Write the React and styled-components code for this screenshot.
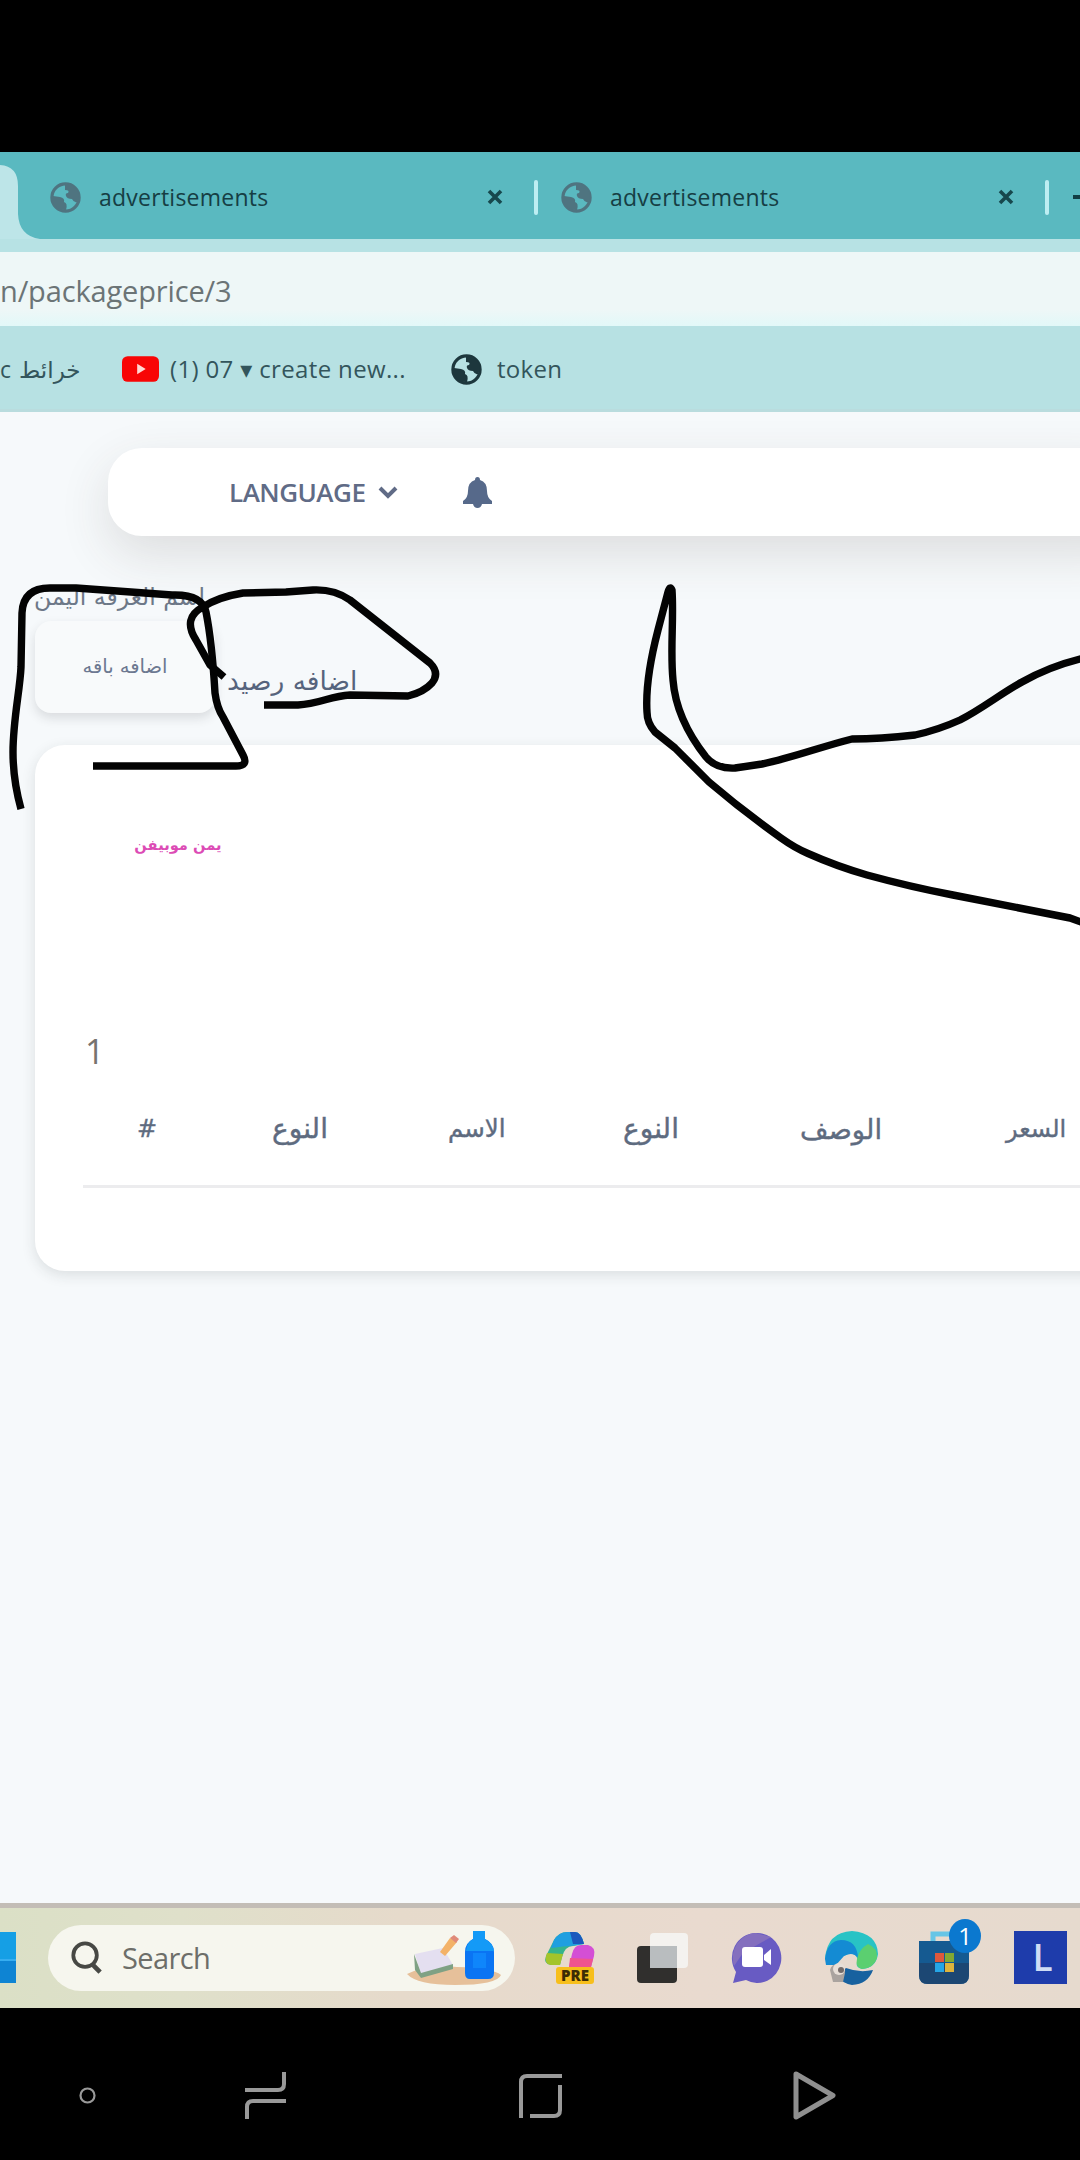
import React from "react";
import styled, { createGlobalStyle } from "styled-components";

const GlobalStyle = createGlobalStyle`
  * { box-sizing: border-box; }
  html, body { margin: 0; padding: 0; background: #000; }
  body { font-family: "Open Sans", "Noto Sans", "DejaVu Sans", sans-serif; }
`;

const Screen = styled.div`
  position: relative;
  width: 1080px;
  height: 2160px;
  padding-top: 152px;
  overflow: hidden;
  background: #000;
  display: flex;
  flex-direction: column;
`;

const TabStrip = styled.div`
  display: flex;
  flex: none;
  height: 87px;
  background: #5ab9c0;
  overflow: hidden;
`;

const ActiveTab = styled.svg`
  flex: none;
  width: 40px;
  height: 87px;
`;

const Tab = styled.div`
  display: flex;
  flex: none;
  align-items: center;
  width: 511px;
  height: 87px;
  padding-left: 10px;
  padding-top: 3px;
`;

const TabTitle = styled.span`
  flex: none;
  width: 380px;
  margin-left: 18px;
  font-size: 23px;
  line-height: 30px;
  letter-spacing: 0.25px;
  color: #163e44;
`;

const CloseMark = styled.svg`
  flex: none;
  width: 16px;
  height: 16px;
  margin-left: 8px;
`;

const TabDivider = styled.i`
  flex: none;
  width: 4px;
  height: 35px;
  margin-left: 31px;
  background: #bdeef2;
  border-radius: 2px;
`;

const NewTab = styled.svg`
  flex: none;
  width: 18px;
  height: 87px;
  margin-left: 11px;
`;

const AddressBar = styled.div`
  flex: none;
  height: 87px;
  padding: 13px 0 0;
  background: #b7e2e4;
`;

const AddressField = styled.div`
  height: 74px;
  padding: 19px 0 0 0;
  background: linear-gradient(#eef7f7 78%, #e2f8f8);
  font-size: 29px;
  line-height: 40px;
  letter-spacing: -0.15px;
  white-space: nowrap;
  color: #6b7476;
`;

const Bookmarks = styled.div`
  display: flex;
  flex: none;
  align-items: center;
  height: 86px;
  padding-top: 3px;
  background: #b7e1e3;
  border-bottom: 3px solid #b9dcde;
  white-space: nowrap;
`;

const Bookmark = styled.div`
  display: flex;
  flex: none;
  align-items: center;
  width: ${(p) => p.$width}px;
  gap: ${(p) => p.$gap || 0}px;
  font-size: ${(p) => p.$size || 24}px;
  line-height: 34px;
  letter-spacing: ${(p) => p.$spacing || 0}px;
  color: #33555c;
`;

const Page = styled.main`
  flex: none;
  height: 1491px;
  padding-top: 36px;
  background: #f6f9fb;
  overflow: hidden;
`;

const NavCard = styled.header`
  display: flex;
  align-items: center;
  height: 88px;
  margin-left: 108px;
  margin-right: -60px;
  padding-left: 121px;
  border-radius: 34px;
  background: #fff;
  box-shadow: 0 18px 50px rgba(70, 60, 50, 0.14);
`;

const Language = styled.button`
  display: flex;
  align-items: center;
  gap: 13px;
  width: 234px;
  padding: 0;
  border: 0;
  background: none;
  font: 600 26px/36px "Open Sans", sans-serif;
  letter-spacing: -0.5px;
  color: #606b86;
`;

const Heading = styled.h1`
  width: 170px;
  margin: 43px 0 0 35px;
  font: 400 23.5px/36px "DejaVu Sans", sans-serif;
  text-align: right;
  white-space: nowrap;
  color: #6d7888;
`;

const Actions = styled.div`
  display: flex;
  align-items: flex-start;
  margin: 6px 0 0 35px;
`;

const PackageButton = styled.button`
  width: 180px;
  height: 92px;
  padding: 0;
  border: 0;
  border-radius: 16px;
  background: #f8fafb;
  box-shadow: 0 5px 11px rgba(40, 45, 50, 0.14);
  font: 400 19.5px/30px "DejaVu Sans", sans-serif;
  color: #6c7891;
`;

const BalanceLink = styled.span`
  margin: 43px 0 0 12px;
  font: 400 26.5px/34px "DejaVu Sans", sans-serif;
  color: #56647d;
  white-space: nowrap;
`;

const Panel = styled.section`
  height: 526px;
  margin: 32px -60px 0 35px;
  padding: 84px 0 0 48px;
  border-radius: 30px;
  background: #fff;
  box-shadow: 0 4px 14px rgba(40, 45, 45, 0.13);
`;

const Company = styled.div`
  width: 88px;
  margin-left: 51px;
  font: 700 14.7px/32px "DejaVu Sans", sans-serif;
  white-space: nowrap;
  text-align: center;
  color: #dc4bb5;
`;

const Counter = styled.div`
  margin: 168px 0 0 2px;
  font-size: 34px;
  line-height: 44px;
  color: #77736f;
`;

const HeadRow = styled.div`
  display: flex;
  align-items: flex-start;
  height: 115px;
  padding: 38px 0 0 54px;
  border-bottom: 3px solid #ececee;
`;

const HeadCell = styled.div`
  flex: none;
  width: ${(p) => p.$width}px;
  font: 400 ${(p) => p.$size || 24}px/36px "DejaVu Sans", sans-serif;
  white-space: nowrap;
  color: #5e6b7f;
  -webkit-text-stroke: 0.4px #5e6b7f;
`;

const Taskbar = styled.footer`
  display: flex;
  flex: none;
  align-items: center;
  height: 105px;
  padding-bottom: 1px;
  border-top: 5px solid #c3bdb6;
  background: linear-gradient(90deg, #dbe0c6 0, #dfe0ca 180px, #e6dacb 400px, #e9dacf 700px, #e6dace 100%);
`;

const StartIcon = styled.div`
  flex: none;
  width: 16px;
  height: 51px;
  background: linear-gradient(#159fe5 0 52%, #36adf0 52% 56%, #0e84d3 56%);
`;

const SearchPill = styled.div`
  display: flex;
  flex: none;
  align-items: center;
  width: 467px;
  height: 66px;
  margin-left: 32px;
  padding-left: 22px;
  border-radius: 33px;
  background: #f6f6ee;
`;

const SearchLabel = styled.span`
  flex: none;
  width: 285px;
  margin-left: 20px;
  padding-top: 1px;
  font-size: 29px;
  line-height: 40px;
  letter-spacing: -0.6px;
  color: #6d6e69;
`;

const Icon = styled.svg`
  display: block;
  flex: none;
  overflow: visible;
  width: ${(p) => p.$w}px;
  height: ${(p) => p.$h}px;
  margin-left: ${(p) => p.$left || 0}px;
`;

const LetterTile = styled.div`
  flex: none;
  width: 53px;
  height: 53px;
  margin-left: 45px;
  padding-left: 4px;
  background: #1e3cab;
  font: 600 37px/51px "Open Sans", sans-serif;
  text-align: center;
  color: #cfdcf5;
`;

const StoreBox = styled.div`
  position: relative;
  flex: none;
  width: 50px;
  height: 53px;
  margin-left: 41px;
`;

const StoreBadge = styled.span`
  position: absolute;
  left: 30px;
  top: -12px;
  width: 32px;
  height: 34px;
  border-radius: 50%;
  background: #0b78cf;
  font: 400 24px/33px "Open Sans", sans-serif;
  text-align: center;
  color: #fff;
`;

const SystemNav = styled.nav`
  display: flex;
  align-items: center;
  flex: none;
  height: 152px;
  padding: 23px 0 0 79px;
`;

const Scribbles = styled.svg`
  position: absolute;
  left: 0;
  top: 0;
  width: 1080px;
  height: 2160px;
  pointer-events: none;
`;

function Globe({ color }) {
  return (
    <Icon $w={31} $h={31} viewBox="0 0 31 31">
      <circle cx="15.5" cy="15.5" r="13.6" fill="none" stroke={color} strokeWidth="3.2" />
      <path
        d="M15 2 C23 1 29 7 29 15 L27 20 Q24 21 22 17 Q17 17 16 14 Q15 11 18 11 Q20 8 15 8 Z M3 14 L10 15 Q15 16 14 20 Q18 21 16 28 Q8 29 3 20 Z"
        fill={color}
      />
    </Icon>
  );
}

function BrowserTab() {
  return (
    <Tab>
      <Globe color="#4f7480" />
      <TabTitle>advertisements</TabTitle>
      <CloseMark viewBox="0 0 16 16" stroke="#17484d" strokeWidth="3.6">
        <path d="M2 2 L14 14 M14 2 L2 14" />
      </CloseMark>
      <TabDivider />
    </Tab>
  );
}

function SearchArt() {
  return (
    <Icon $w={96} $h={56} viewBox="0 0 96 56">
      <path d="M0 44 Q22 34 50 37 Q86 38 94 45 Q90 55 48 55 Q10 55 0 44Z" fill="#e6c09a" />
      <path d="M8 24 L36 18 L46 35 L14 45 Z" fill="#e4dff0" />
      <path d="M7 24 L14 43 L46 34 L46 39 L14 48 L8 40 Z" fill="#7fa184" />
      <path d="M33 22 L43 8 L50 12 L38 26 Z" fill="#f3b268" />
      <path d="M43 8 L47 5 L52 9 L49 13 Z" fill="#e08a79" />
      <path d="M66 1 H78 V9 Q87 13 87 22 V43 Q87 49 81 49 H63 Q58 49 58 43 V22 Q58 13 66 9Z" fill="#0a74f3" />
      <path d="M66 1 H78 V9 Q86 13 87 21 H59 Q60 12 66 9Z" fill="#149af7" />
      <path d="M66 23 h13 v15 h-13z" fill="#0f86fb" />
    </Icon>
  );
}

function Copilot() {
  return (
    <Icon $w={50} $h={52} $left={30} viewBox="0 0 50 52">
      <path d="M9 8 Q14 0 22 0 H30 Q36 0 39 12 L28 14 Q20 14 17 25 L15 33 H6 Q-2 32 1 24 Z" fill="#36b48c" />
      <path d="M9 8 Q14 0 22 0 H30 Q36 0 39 12 L26 14 Q20 14 6 16Z" fill="#1f9fe0" />
      <path d="M25 0 H30 Q36 0 39 12 H28Z" fill="#1b58bd" />
      <path d="M2 21 L18 22 L15 33 H6 Q-2 32 2 21Z" fill="#a4c42b" />
      <path d="M27 22 Q29 13 36 13 H43 Q51 15 49 24 L46 35 H24 Z" fill="#d44fd5" />
      <path d="M25 26 L48 27 L46 35 H24Z" fill="#ef5590" />
      <rect x="11" y="35" width="38" height="17" rx="3" fill="#f7bf1c" />
      <text x="30" y="49" fontFamily="Open Sans, sans-serif" fontWeight="800" fontSize="15" textAnchor="middle" fill="#3d2d05">
        PRE
      </text>
    </Icon>
  );
}

function TaskView() {
  return (
    <Icon $w={53} $h={50} $left={42} viewBox="0 0 53 50">
      <rect x="0" y="13" width="40" height="37" rx="4" fill="#302f2d" />
      <rect x="13" y="0" width="38" height="35" rx="4" fill="#f4f2ef" />
      <rect x="13" y="13" width="27" height="22" fill="#b9bdbf" />
    </Icon>
  );
}

function Chat() {
  return (
    <Icon $w={49} $h={50} $left={41} viewBox="0 0 49 50">
      <path d="M25 0 A24 25 0 1 1 15 47 L2 50 L5 39 A24 25 0 0 1 25 0Z" fill="#685bc3" />
      <path d="M25 0 A24 25 0 0 0 3 33 L12 20 L40 4Z" fill="#846fbe" />
      <rect x="11" y="14" width="21" height="20" rx="3" fill="#fff" />
      <path d="M33 22 L40 16 V32 L33 27Z" fill="#fff" />
    </Icon>
  );
}

function Edge() {
  return (
    <Icon $w={54} $h={54} $left={44} viewBox="0 0 54 54">
      <path d="M1 28 Q3 1 28 0 Q53 2 54 23 Q52 37 38 38 Q30 36 34 30 Q32 20 22 24 Q9 30 1 28Z" fill="#28c3c5" />
      <path d="M1 28 Q3 10 17 9 Q33 9 34 27 Q29 20 20 25 L12 34 H2Z" fill="#148bd3" />
      <path d="M33 28 Q35 18 44 13 Q54 17 53 27 Q50 37 38 38 Q31 36 33 28Z" fill="#5bcf70" />
      <path d="M22 37 Q35 42 49 39 Q44 53 28 54 Q17 52 14 44Z" fill="#17619f" />
      <path d="M6 39 Q8 32 15 34 Q22 35 21 42 L19 51 H9 Z" fill="#aaa39f" />
      <circle cx="15" cy="38" r="6" fill="#e8dfd8" />
      <circle cx="17" cy="39" r="3" fill="#746b69" />
    </Icon>
  );
}

function Store() {
  return (
    <StoreBox>
      <Icon $w={50} $h={53} viewBox="0 0 50 53">
        <path d="M14 10 V3 H34 V10" fill="none" stroke="#66c5e6" strokeWidth="5" />
        <path d="M0 10 H50 V44 Q50 53 41 53 H9 Q0 53 0 44Z" fill="#155a91" />
        <path d="M0 32 H50 V44 Q50 53 41 53 H9 Q0 53 0 44Z" fill="#1c4773" />
        <path d="M16 22h9v9h-9z" fill="#dd583c" />
        <path d="M26 22h9v9h-9z" fill="#83a832" />
        <path d="M16 32h9v9h-9z" fill="#25a6e7" />
        <path d="M26 32h9v9h-9z" fill="#dfb43c" />
      </Icon>
      <StoreBadge>1</StoreBadge>
    </StoreBox>
  );
}

const columns = [
  { label: "#", width: 135, size: 24 },
  { label: "النوع", width: 176, size: 28 },
  { label: "الاسم", width: 175, size: 24.5 },
  { label: "النوع", width: 177, size: 28 },
  { label: "الوصف", width: 206, size: 27.5 },
  { label: "السعر", width: 90, size: 24 },
];

export default function App() {
  return (
    <Screen>
      <GlobalStyle />
      <TabStrip>
        <ActiveTab viewBox="0 0 40 87">
          <path d="M0 13 Q18 14 18 34 V62 Q19 84 40 87 H0Z" fill="#bde5e8" />
        </ActiveTab>
        <BrowserTab />
        <BrowserTab />
        <NewTab viewBox="0 0 18 87" stroke="#123f45" strokeWidth="4">
          <path d="M0 45 H18 M9 36 V54" />
        </NewTab>
      </TabStrip>
      <AddressBar>
        <AddressField>n/packageprice/3</AddressField>
      </AddressBar>
      <Bookmarks>
        <Bookmark $width={122} $size={23} $gap={8} dir="ltr">
          <span>c</span>
          <span>خرائط</span>
        </Bookmark>
        <Bookmark $width={329} $gap={11} $spacing={0.35}>
          <Icon $w={37} $h={26} viewBox="0 0 39 27">
            <rect width="39" height="27" rx="6" fill="#f80505" />
            <path d="M16 8 L25 13.5 L16 19Z" fill="#ffd9d4" />
          </Icon>
          <span>(1) 07 ▾ create new...</span>
        </Bookmark>
        <Bookmark $width={140} $gap={15} $spacing={0.3}>
          <Globe color="#1d373d" />
          <span>token</span>
        </Bookmark>
      </Bookmarks>
      <Page>
        <NavCard>
          <Language>
            LANGUAGE
            <Icon $w={20} $h={13} viewBox="0 0 20 13">
              <path d="M2 2 L10 10 L18 2" fill="none" stroke="#606b86" strokeWidth="4" />
            </Icon>
          </Language>
          <Icon $w={29} $h={31} viewBox="0 0 29 31">
            <path
              d="M14.5 0 Q17 0 17 3 Q24 5 24 14 Q24 21 29 24 V27 H0 V24 Q5 21 5 14 Q5 5 12 3 Q12 0 14.5 0Z M10 27 H19 Q18 31 14.5 31 Q11 31 10 27Z"
              fill="#56698a"
            />
          </Icon>
        </NavCard>
        <Heading dir="rtl">اسم الغرفه اليمن</Heading>
        <Actions>
          <PackageButton>اضافه باقه</PackageButton>
          <BalanceLink>اضافه رصيد</BalanceLink>
        </Actions>
        <Panel>
          <Company>يمن موبيفن</Company>
          <Counter>1</Counter>
          <HeadRow>
            {columns.map((c, i) => (
              <HeadCell key={i} $width={c.width} $size={c.size}>
                {c.label}
              </HeadCell>
            ))}
          </HeadRow>
        </Panel>
      </Page>
      <Taskbar>
        <StartIcon />
        <SearchPill>
          <Icon $w={32} $h={33} viewBox="0 0 34 35" fill="none" stroke="#474844" strokeWidth="4">
            <circle cx="16" cy="15" r="12.5" />
            <path d="M23 24 L32 33" strokeWidth="5" />
          </Icon>
          <SearchLabel>Search</SearchLabel>
          <SearchArt />
        </SearchPill>
        <Copilot />
        <TaskView />
        <Chat />
        <Edge />
        <Store />
        <LetterTile>L</LetterTile>
      </Taskbar>
      <SystemNav>
        <Icon $w={17} $h={17} viewBox="0 0 17 17">
          <circle cx="8.5" cy="8.5" r="7" fill="none" stroke="#999" strokeWidth="2.2" />
        </Icon>
        <Icon $w={41} $h={47} $left={149} viewBox="0 0 41 47" fill="none" stroke="#999" strokeWidth="4">
          <path d="M0 18 H33 Q39 18 39 12 V0 M41 29 H8 Q2 29 2 35 V47" />
        </Icon>
        <Icon $w={43} $h={44} $left={233} viewBox="0 0 43 44" fill="none" stroke="#999" strokeWidth="4">
          <path d="M2 44 V8 Q2 2 8 2 H43 M41 11 V36 Q41 42 35 42 H11" />
        </Icon>
        <Icon $w={43} $h={49} $left={231} viewBox="0 0 43 49" fill="none" stroke="#8f8f8f" strokeWidth="5" strokeLinejoin="round">
          <path d="M3 3 L40 24.5 L3 46Z" />
        </Icon>
      </SystemNav>
      <Scribbles viewBox="0 0 1080 2160" fill="none" stroke="#030303" strokeWidth="7.4" strokeLinejoin="round">
        <path d="M21 809 Q13 780 13 752 C13 720 20 690 21 667 L22 613 Q23 588 50 588 H76 L172 595 Q202 594 206 612 Q212 642 215 693 Q217 708 223 717 L243 755 Q249 766 236 766 H93" />
        <path d="M264 705 H298 C320 704 330 696 350 695 L408 696 Q424 692 432 683 Q440 673 430 663 L350 600 Q334 589 313 590 L286 592 L243 593 Q218 597 203 607 Q182 618 196 640 L210 665 L224 677" />
        <path d="M1084 658 Q1050 666 1022 682 C1000 694 982 709 960 720 Q938 730 915 735 Q880 739 852 739 C820 747 792 758 762 764 L735 768 Q716 769 706 757 Q676 719 673 680 C670 650 674 620 672 590 Q670 585 668 592 L658 630 Q645 680 647 712 Q647 723 655 732 L675 748 L709 782 Q743 811 781 838 Q795 848 808 853.5 Q836 866 867 875 Q911 887 953 895 L1070 918 L1084 923" />
      </Scribbles>
    </Screen>
  );
}
